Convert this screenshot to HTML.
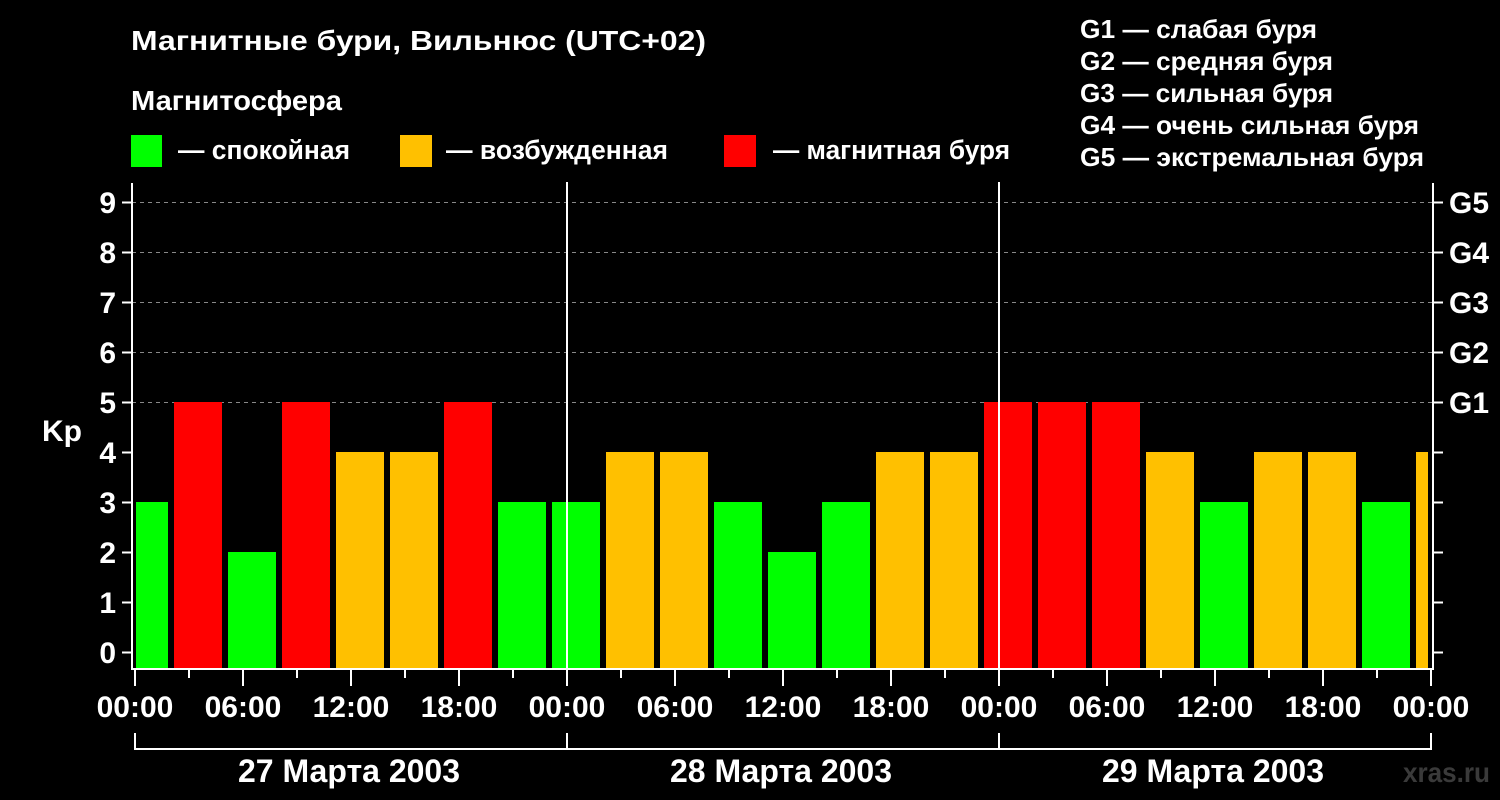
<!DOCTYPE html>
<html><head><meta charset="utf-8"><style>
html,body{margin:0;padding:0;background:#000;}
svg{display:block}
text{font-family:"Liberation Sans","DejaVu Sans",sans-serif;font-weight:bold;fill:#fff;}
</style></head><body>
<svg width="1500" height="800" xmlns="http://www.w3.org/2000/svg">
<rect width="1500" height="800" fill="#000"/>
<text x="131" y="50" font-size="28" textLength="575" lengthAdjust="spacingAndGlyphs">Магнитные бури, Вильнюс (UTC+02)</text>
<text x="131" y="110" font-size="28" textLength="211" lengthAdjust="spacingAndGlyphs">Магнитосфера</text>
<rect x="131" y="135" width="31" height="32" fill="#00ff00"/>
<text x="178" y="159" font-size="27" textLength="172" lengthAdjust="spacingAndGlyphs">— спокойная</text>
<rect x="400" y="135" width="32" height="32" fill="#ffc000"/>
<text x="446" y="159" font-size="27" textLength="222" lengthAdjust="spacingAndGlyphs">— возбужденная</text>
<rect x="724" y="135" width="32" height="32" fill="#ff0000"/>
<text x="773" y="159" font-size="27" textLength="237" lengthAdjust="spacingAndGlyphs">— магнитная буря</text>
<g font-size="26">
<text x="1080" y="38" textLength="237" lengthAdjust="spacingAndGlyphs">G1 — слабая буря</text>
<text x="1080" y="70" textLength="253" lengthAdjust="spacingAndGlyphs">G2 — средняя буря</text>
<text x="1080" y="102" textLength="253" lengthAdjust="spacingAndGlyphs">G3 — сильная буря</text>
<text x="1080" y="134" textLength="339" lengthAdjust="spacingAndGlyphs">G4 — очень сильная буря</text>
<text x="1080" y="166" textLength="344" lengthAdjust="spacingAndGlyphs">G5 — экстремальная буря</text>
</g>
<g stroke="#888" stroke-dasharray="4,4" stroke-width="1">
<line x1="132" y1="202.5" x2="1432" y2="202.5"/>
<line x1="132" y1="252.5" x2="1432" y2="252.5"/>
<line x1="132" y1="302.5" x2="1432" y2="302.5"/>
<line x1="132" y1="352.5" x2="1432" y2="352.5"/>
<line x1="132" y1="402.5" x2="1432" y2="402.5"/>
</g>
<g>
<rect x="136" y="502" width="32" height="166" fill="#00ff00"/>
<rect x="174" y="402" width="48" height="266" fill="#ff0000"/>
<rect x="228" y="552" width="48" height="116" fill="#00ff00"/>
<rect x="282" y="402" width="48" height="266" fill="#ff0000"/>
<rect x="336" y="452" width="48" height="216" fill="#ffc000"/>
<rect x="390" y="452" width="48" height="216" fill="#ffc000"/>
<rect x="444" y="402" width="48" height="266" fill="#ff0000"/>
<rect x="498" y="502" width="48" height="166" fill="#00ff00"/>
<rect x="552" y="502" width="48" height="166" fill="#00ff00"/>
<rect x="606" y="452" width="48" height="216" fill="#ffc000"/>
<rect x="660" y="452" width="48" height="216" fill="#ffc000"/>
<rect x="714" y="502" width="48" height="166" fill="#00ff00"/>
<rect x="768" y="552" width="48" height="116" fill="#00ff00"/>
<rect x="822" y="502" width="48" height="166" fill="#00ff00"/>
<rect x="876" y="452" width="48" height="216" fill="#ffc000"/>
<rect x="930" y="452" width="48" height="216" fill="#ffc000"/>
<rect x="984" y="402" width="48" height="266" fill="#ff0000"/>
<rect x="1038" y="402" width="48" height="266" fill="#ff0000"/>
<rect x="1092" y="402" width="48" height="266" fill="#ff0000"/>
<rect x="1146" y="452" width="48" height="216" fill="#ffc000"/>
<rect x="1200" y="502" width="48" height="166" fill="#00ff00"/>
<rect x="1254" y="452" width="48" height="216" fill="#ffc000"/>
<rect x="1308" y="452" width="48" height="216" fill="#ffc000"/>
<rect x="1362" y="502" width="48" height="166" fill="#00ff00"/>
<rect x="1416" y="452" width="12" height="216" fill="#ffc000"/>
</g>
<g stroke="#fff" stroke-width="2" fill="none">
<polyline points="132,183 132,669 1433,669 1433,183"/>
<line x1="567" y1="182" x2="567" y2="669"/>
<line x1="999" y1="182" x2="999" y2="669"/>
<path d="M122 652.5h10M122 602.5h10M122 552.5h10M122 502.5h10M122 452.5h10M122 402.5h10M122 352.5h10M122 302.5h10M122 252.5h10M122 202.5h10"/>
<path d="M1433 652.5h10M1433 602.5h10M1433 552.5h10M1433 502.5h10M1433 452.5h10M1433 402.5h10M1433 352.5h10M1433 302.5h10M1433 252.5h10M1433 202.5h10"/>
<path d="M135 669v17M243 669v17M351 669v17M459 669v17M567 669v17M675 669v17M783 669v17M891 669v17M999 669v17M1107 669v17M1215 669v17M1323 669v17M1431 669v17"/>
<path d="M189 669v9M297 669v9M405 669v9M513 669v9M621 669v9M729 669v9M837 669v9M945 669v9M1053 669v9M1161 669v9M1269 669v9M1377 669v9"/>
<polyline points="135,733 135,749 1431,749 1431,733"/>
<line x1="567" y1="733" x2="567" y2="749"/>
<line x1="999" y1="733" x2="999" y2="749"/>
</g>
<g font-size="30" text-anchor="end">
<text x="116" y="663">0</text><text x="116" y="613">1</text><text x="116" y="563">2</text><text x="116" y="513">3</text><text x="116" y="463">4</text><text x="116" y="413">5</text><text x="116" y="363">6</text><text x="116" y="313">7</text><text x="116" y="263">8</text><text x="116" y="213">9</text>
</g>
<text x="42" y="441" font-size="30">Kp</text>
<g font-size="30">
<text x="1449" y="213">G5</text><text x="1449" y="263">G4</text><text x="1449" y="313">G3</text><text x="1449" y="363">G2</text><text x="1449" y="413">G1</text>
</g>
<g font-size="30" text-anchor="middle">
<text x="135" y="717">00:00</text><text x="243" y="717">06:00</text><text x="351" y="717">12:00</text><text x="459" y="717">18:00</text>
<text x="567" y="717">00:00</text><text x="675" y="717">06:00</text><text x="783" y="717">12:00</text><text x="891" y="717">18:00</text>
<text x="999" y="717">00:00</text><text x="1107" y="717">06:00</text><text x="1215" y="717">12:00</text><text x="1323" y="717">18:00</text><text x="1431" y="717">00:00</text>
</g>
<g font-size="32" text-anchor="middle">
<text x="349" y="782">27 Марта 2003</text>
<text x="781" y="782">28 Марта 2003</text>
<text x="1213" y="782">29 Марта 2003</text>
</g>
<text x="1403" y="782" font-size="28" style="fill:#3a3a3a" textLength="87" lengthAdjust="spacingAndGlyphs">xras.ru</text>
</svg>
</body></html>
